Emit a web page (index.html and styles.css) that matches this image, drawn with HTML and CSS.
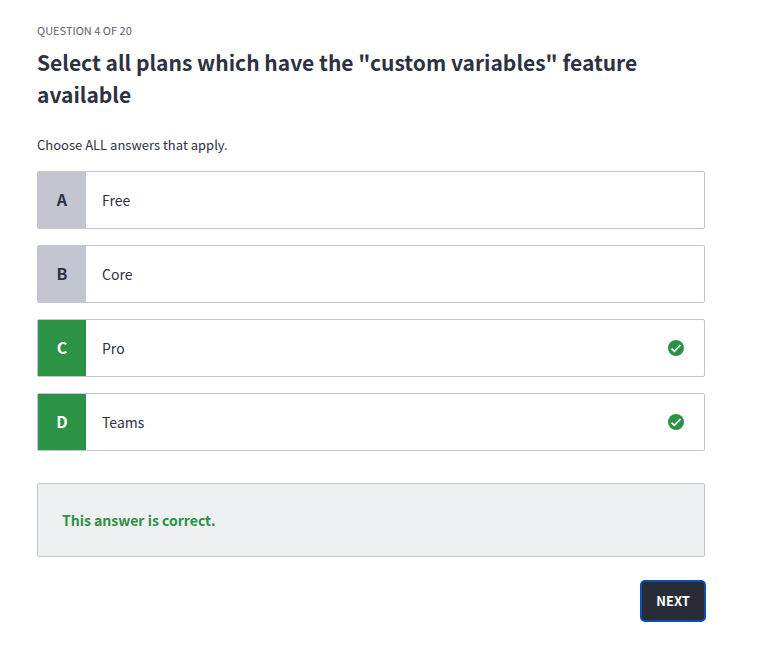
FILE: index.html
```html
<!DOCTYPE html>
<html lang="en">
<head>
<meta charset="utf-8">
<meta name="viewport" content="width=device-width, initial-scale=1">
<title>Quiz</title>
<link rel="stylesheet" href="styles.css">
</head>
<body>
<main class="quiz">
  <p class="progress">QUESTION 4 OF 20</p>
  <h1 class="question">Select all plans which have the "custom variables" feature available</h1>
  <form>
    <fieldset class="answers">
      <legend class="hint">Choose ALL answers that apply.</legend>
      <label class="answer">
        <input class="check" type="checkbox" name="plan" value="free">
        <span class="letter">A</span>
        <span class="text">Free</span>
      </label>
      <label class="answer">
        <input class="check" type="checkbox" name="plan" value="core">
        <span class="letter">B</span>
        <span class="text">Core</span>
      </label>
      <label class="answer">
        <input class="check" type="checkbox" name="plan" value="pro" checked>
        <span class="letter">C</span>
        <span class="text">Pro</span>
        <svg class="mark" viewBox="0 0 16 16" aria-hidden="true"><circle cx="8" cy="8" r="8"/><path d="M3.5 8.6 6.4 11.3 12.5 5"/></svg>
      </label>
      <label class="answer">
        <input class="check" type="checkbox" name="plan" value="teams" checked>
        <span class="letter">D</span>
        <span class="text">Teams</span>
        <svg class="mark" viewBox="0 0 16 16" aria-hidden="true"><circle cx="8" cy="8" r="8"/><path d="M3.5 8.6 6.4 11.3 12.5 5"/></svg>
      </label>
    </fieldset>
    <p class="feedback">This answer is correct.</p>
    <div class="actions"><button class="next" type="button">NEXT</button></div>
  </form>
</main>
</body>
</html>
```
FILE: styles.css
```css
* { box-sizing: border-box; }
body {
  margin: 0;
  background: #fff;
  color: #2d3142;
  font: 14px/24px "Noto Sans CJK SC", "Noto Sans", sans-serif;
}
.quiz { padding: 22px 57px 32px 37px; }
.progress {
  margin: 0 0 8px;
  font-size: 11px;
  line-height: 16px;
  color: #5c6070;
}
.question {
  margin: 0;
  font-size: 21px;
  line-height: 32px;
  font-weight: 700;
}
.answers {
  display: grid;
  gap: 16px;
  min-width: 0;
  margin: 24px 0 0;
  padding: 0;
  border: 0;
}
.hint {
  padding: 0 0 15px;
  font-size: 13px;
  line-height: 22px;
}
.answer {
  position: relative;
  display: flex;
  align-items: center;
  min-height: 58px;
  border: 1px solid #c3c5d1;
  border-radius: 2px;
  cursor: pointer;
}
.check {
  position: absolute;
  inset: 0;
  margin: 0;
  opacity: 0;
}
.letter {
  display: flex;
  align-items: center;
  justify-content: center;
  align-self: stretch;
  width: 48px;
  padding-bottom: 2px;
  background: #c3c5d1;
  font-size: 16px;
  font-weight: 700;
}
.check:checked + .letter {
  background: #2b9246;
  color: #fff;
}
.text { flex: 1; padding: 0 16px; }
.mark {
  width: 16px;
  height: 16px;
  margin-right: 20px;
  fill: #2b9246;
}
.mark path { fill: none; stroke: #fff; stroke-width: 1.7; }
.feedback {
  margin: 32px 0 0;
  padding: 24px;
  border: 1px solid #c3c5d1;
  border-radius: 2px;
  background: #eff0f2;
  color: #2b9246;
  font-weight: 700;
}
.actions {
  display: flex;
  justify-content: flex-end;
  margin: 23px -1px 0 0;
}
.next {
  padding: 8px 14px;
  border: 2px solid #0b4fb3;
  border-radius: 5px;
  background: #292b38;
  color: #fff;
  font: 700 13px/22px "Noto Sans CJK SC", "Noto Sans", sans-serif;
}
```
